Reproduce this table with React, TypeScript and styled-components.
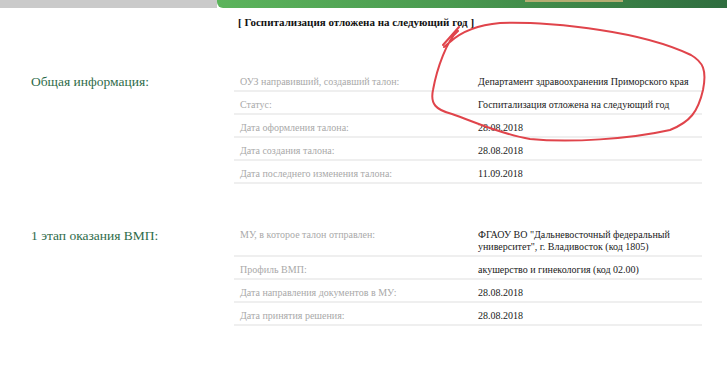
import React from "react";
import styled, { createGlobalStyle } from "styled-components";

const serif = "'Liberation Serif', serif";

const GlobalStyle = createGlobalStyle`
  body {
    margin: 0;
    padding: 0;
    background: #ffffff;
    font-family: ${serif};
  }
`;

const Page = styled.div`
  position: relative;
  width: 727px;
  height: 377px;
  overflow: hidden;
  background: #fff;
  font-family: ${serif};
`;

const TopBar = styled.div`
  display: flex;
  height: 8px;
`;

const GrayTab = styled.div`
  width: 217px;
  background: #cacaca;
`;

const GreenBar = styled.div`
  flex: 1;
  position: relative;
  background: linear-gradient(90deg, #5cb45c 0%, #4a9a50 45%, #2f6d3f 100%);
  border-bottom-left-radius: 6px;
`;

const TanStrip = styled.div`
  position: absolute;
  left: 308px;
  top: 0;
  width: 98px;
  height: 2px;
  background: #b4ad72;
`;

const Content = styled.div`
  display: grid;
  grid-template-columns: 234px 468px;
`;

const Title = styled.div`
  grid-column: 2;
  box-sizing: border-box;
  height: 42px;
  padding: 8px 0 0 4px;
  font-family: ${serif};
  font-size: 11px;
  line-height: 13px;
  font-weight: bold;
  color: #111;
`;

const Section = styled.div`
  display: contents;
`;

const Heading = styled.div<{ $top: number }>`
  padding: ${(p) => p.$top}px 0 0 31px;
  font-family: ${serif};
  font-size: 13.5px;
  line-height: 17px;
  color: #2f6c4a;
`;

const Table = styled.div<{ $top: number }>`
  display: flex;
  flex-direction: column;
  padding-top: ${(p) => p.$top}px;
`;

const Row = styled.div`
  display: grid;
  grid-template-columns: 238px 1fr;
  padding: 7px 0 2px 6px;
  border-bottom: 2px solid #efefef;
  font-family: ${serif};
  font-size: 10px;
  line-height: 12px;
`;

const Label = styled.div`
  color: #a9a9a9;
`;

const Value = styled.div`
  color: #1a1a1a;
  padding-right: 12px;
`;

const Spacer = styled.div`
  grid-column: 1 / span 2;
  height: 38px;
`;

const Scribble = styled.svg`
  position: absolute;
  left: 0;
  top: 0;
  pointer-events: none;
`;

const general = [
  ["ОУЗ направивший, создавший талон:", "Департамент здравоохранения Приморского края"],
  ["Статус:", "Госпитализация отложена на следующий год"],
  ["Дата оформления талона:", "28.08.2018"],
  ["Дата создания талона:", "28.08.2018"],
  ["Дата последнего изменения талона:", "11.09.2018"],
];

const stage = [
  [
    "МУ, в которое талон отправлен:",
    'ФГАОУ ВО "Дальневосточный федеральный университет", г. Владивосток (код 1805)',
  ],
  ["Профиль ВМП:", "акушерство и гинекология (код 02.00)"],
  ["Дата направления документов в МУ:", "28.08.2018"],
  ["Дата принятия решения:", "28.08.2018"],
];

export default function App() {
  return (
    <>
      <GlobalStyle />
      <Page>
        <TopBar>
          <GrayTab />
          <GreenBar>
            <TanStrip />
          </GreenBar>
        </TopBar>
        <Content>
          <Title>[ Госпитализация отложена на следующий год ]</Title>
          <Section>
            <Heading $top={23}>Общая информация:</Heading>
            <Table $top={19}>
              {general.map(([l, v]) => (
                <Row key={l}>
                  <Label>{l}</Label>
                  <Value>{v}</Value>
                </Row>
              ))}
            </Table>
          </Section>
          <Spacer />
          <Section>
            <Heading $top={5}>1 этап оказания ВМП:</Heading>
            <Table $top={0}>
              {stage.map(([l, v]) => (
                <Row key={l}>
                  <Label>{l}</Label>
                  <Value>{v}</Value>
                </Row>
              ))}
            </Table>
          </Section>
        </Content>
        <Scribble width="727" height="377" viewBox="0 0 727 377">
          <path
            d="M459 27 L443 45 M458 31 C447 40 437 68 433 90 C430 104 436 110 452 114 C475 122 500 134 530 139 C570 143 630 139 670 130 C690 122 698 112 703 90 C707 70 703 62 691 55 C670 45 640 36 600 30 C570 25 530 22 500 23 C478 25 462 31 450 42 L444 47"
            fill="none"
            stroke="#e0444b"
            strokeWidth="2"
            strokeLinecap="round"
            strokeLinejoin="round"
          />
        </Scribble>
      </Page>
    </>
  );
}
